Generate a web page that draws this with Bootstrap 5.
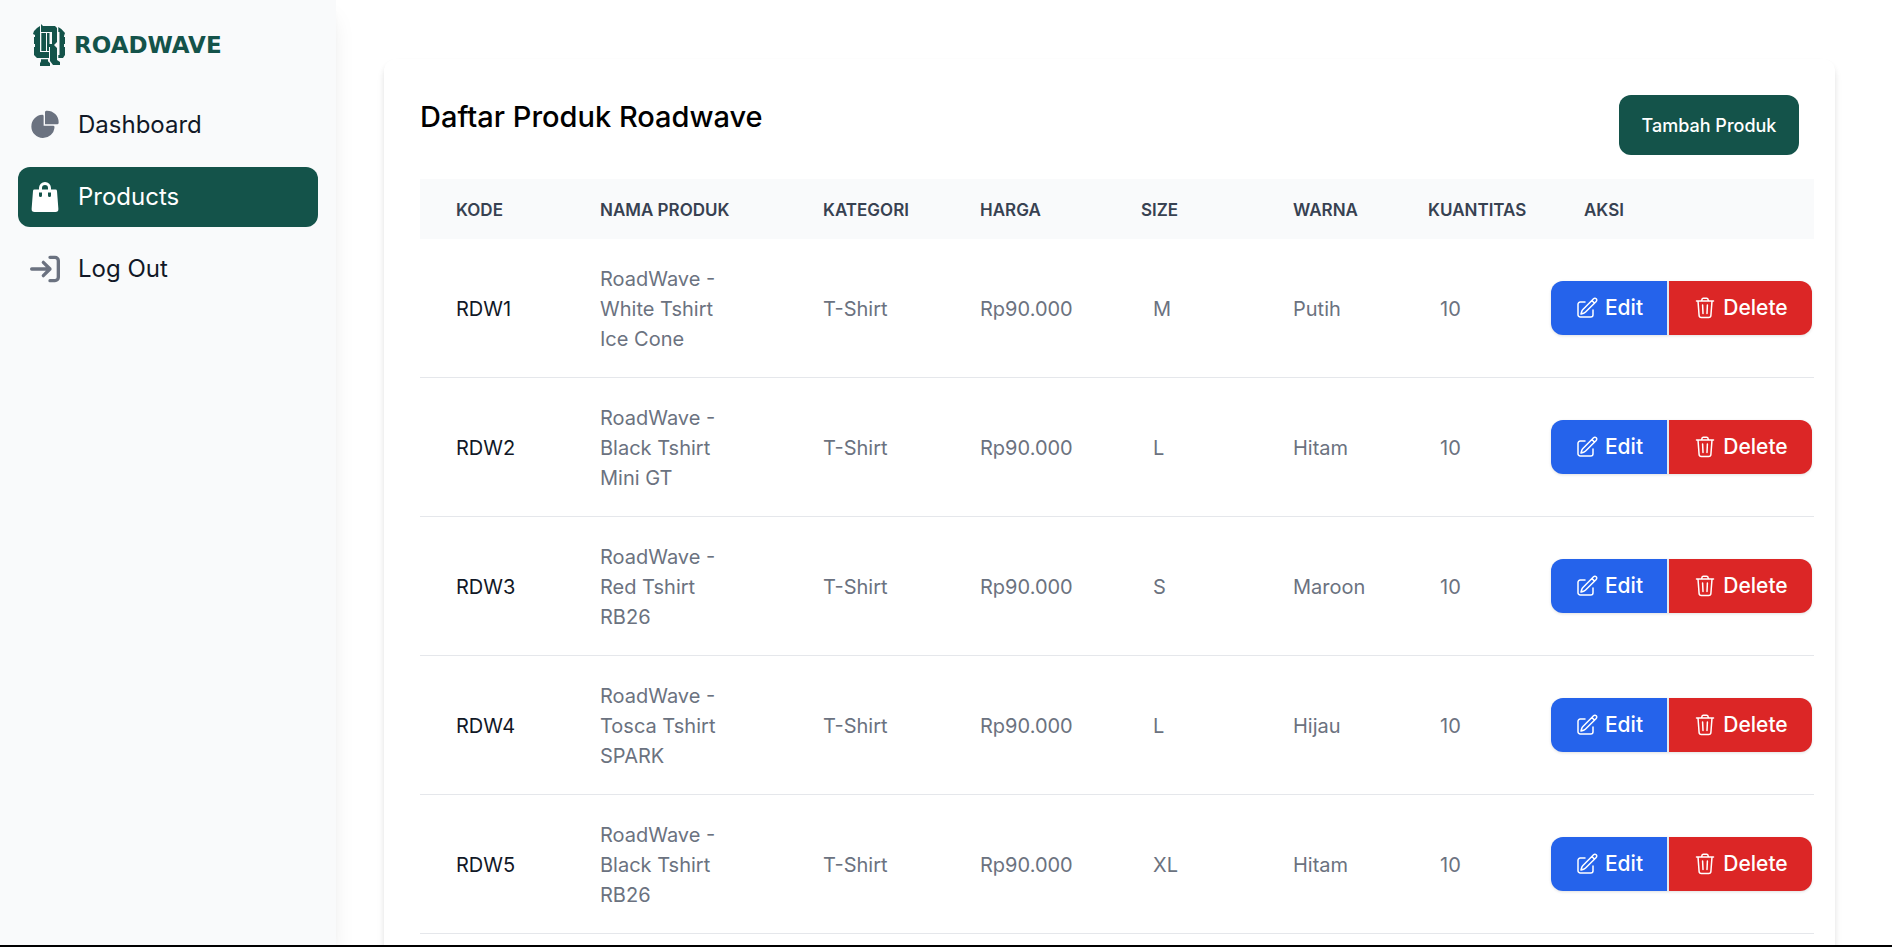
<!DOCTYPE html>
<html lang="id">
<head>
<meta charset="utf-8">
<meta name="viewport" content="width=device-width, initial-scale=1">
<title>Roadwave - Products</title>
<link href="https://cdn.jsdelivr.net/npm/bootstrap@5.3.0/dist/css/bootstrap.min.css" rel="stylesheet">
<style>
  :root { --rw-green: #14534a; --rw-soft: #f9fafb; --rw-gray: #6b7280; --rw-ink: #111827; }
  body { font-family: Inter, "Liberation Sans", sans-serif; font-size: 20px; line-height: 30px; color: var(--rw-gray); }
  .shell { border-bottom: 2px solid #000; }
  .sidebar { width: 336px; background: var(--rw-soft); padding: 20px 18px 24px; box-shadow: 0 15px 23px -5px rgba(0,0,0,.1), 0 6px 9px -6px rgba(0,0,0,.1); }
  .brand { height: 50px; margin: 0 0 25px 15px; gap: 9px; color: var(--rw-green); font: bold 23px/50px "DejaVu Sans", sans-serif; }
  .side-links { gap: 12px; }
  .side-link { height: 60px; padding: 0 12px; gap: 18px; border-radius: 12px; font-size: 24px; color: var(--rw-ink); }
  .side-link svg { color: var(--rw-gray); }
  .side-link.active { background: var(--rw-green); color: #fff; }
  .side-link.active svg { color: #fff; }
  .main-area { min-width: 0; padding: 59px 57px 0 48px; }
  .panel { min-height: 100vh; padding: 36px; border-radius: 12px; box-shadow: 0 6px 9px -1px rgba(0,0,0,.1), 0 3px 6px -2px rgba(0,0,0,.1); }
  .panel-title { font-size: 29px; line-height: 44px; font-weight: 500; color: #000; }
  .btn-add { width: 180px; height: 60px; border-radius: 12px; background: var(--rw-green); color: #fff; font-size: 18px; font-weight: 500; }
  .btn-add:hover { background: #0f423b; color: #fff; }
  .product-table { table-layout: fixed; width: 100%; margin-top: 24px; }
  .product-table th, .product-table td { padding: 25px 36px 23px; text-align: left; }
  .product-table thead th { padding: 19px 0 17px 36px; height: 60px; background: var(--rw-soft); color: #374151; font-size: 17px; line-height: 24px; font-weight: 600; text-transform: uppercase; }
  .product-table tbody tr { border-bottom: 1px solid #e5e7eb; }
  .product-table tbody th { color: var(--rw-ink); font-weight: 400; white-space: nowrap; }
  .product-table .product-name { padding-right: 48px; }
  .product-table .inset { padding-left: 48px; }
  .product-table .actions { padding: 24px 3px; }
  .action-group { gap: 2px; border-radius: 12px; background: #e5e7eb; box-shadow: 0 1px 3px rgba(0,0,0,.12); overflow: hidden; }
  .btn-act { height: 54px; padding: 0; gap: 6px; border-radius: 0; color: #fff; font-size: 21px; font-weight: 500; }
  .btn-edit { width: 116px; background: #2563eb; }
  .btn-edit:hover { background: #1d4ed8; color: #fff; }
  .btn-del { width: 143px; background: #dc2626; }
  .btn-del:hover { background: #b91c1c; color: #fff; }
</style>
</head>
<body>
<svg class="d-none">
  <symbol id="i-edit" viewBox="0 0 24 24"><path fill="none" stroke="currentColor" stroke-width="1.5" stroke-linecap="round" stroke-linejoin="round" d="M16.862 4.487l1.687-1.688a1.875 1.875 0 112.652 2.652L10.582 16.07a4.5 4.5 0 01-1.897 1.13L6 18l.8-2.685a4.5 4.5 0 011.13-1.897l8.932-8.931zm0 0L19.5 7.125M18 14v4.75A2.25 2.25 0 0115.75 21H5.25A2.25 2.25 0 013 18.75V8.25A2.25 2.25 0 015.25 6H10"/></symbol>
  <symbol id="i-trash" viewBox="0 0 24 24"><path fill="none" stroke="currentColor" stroke-width="1.5" stroke-linecap="round" stroke-linejoin="round" d="M3.500 5h17M5 5l1.100 14.500a2.200 2.200 0 0 0 2.200 2h7.400a2.200 2.200 0 0 0 2.200-2L19 5M8.500 5l.4-1.500a1.500 1.500 0 0 1 1.500-1.200h3.200a1.500 1.500 0 0 1 1.500 1.200l.4 1.500M9.600 9l.4 8.500M14.400 9l-.4 8.500"/></symbol>
</svg>
<div class="shell d-flex vh-100 overflow-hidden">
  <aside class="sidebar flex-shrink-0">
    <a href="#" class="brand d-flex align-items-center text-decoration-none">
      <svg width="32" height="42" viewBox="0 0 32 42" fill="currentColor" aria-hidden="true">
        <path d="M4 4l3-2v26h9v6H4l-3-3v-8h1v-3H1v-7h1v-2l-2-1 1-3z"/>
        <path d="M8.300 9H13v18H8.300z"/>
        <path d="M8 0l2 2h12l2 2v14l-3 3 3 3v12l3 2v3h-7l-3-4V23h-1v4h-2V9h2.500v11H19V8H8z"/>
        <path d="M25.300 3l3 2 3.700 4-1 3v1h1v7h-1v3h1v8l-2 3h-4.700v-3h1.200V8h-1.200z"/>
        <path d="M8 35.300h7v2l2 2V42H7v-2.700l1-2z"/>
      </svg>
      <span>ROADWAVE</span>
    </a>
    <nav class="side-links d-flex flex-column">
      <a href="#" class="side-link d-flex align-items-center text-decoration-none">
        <svg width="30" height="30" viewBox="0 0 22 21" fill="currentColor" aria-hidden="true"><path d="M16.975 11H10V4.025a1 1 0 0 0-1.066-.998 8.500 8.500 0 1 0 9.039 9.039.999.999 0 0 0-1-1.066h.002Z"/><path d="M12.500 0c-.157 0-.311.010-.565.027A1 1 0 0 0 11 1.020V10h8.975a1 1 0 0 0 1-.935c.013-.188.028-.374.028-.565A8.510 8.510 0 0 0 12.500 0Z"/></svg>
        <span>Dashboard</span>
      </a>
      <a href="#" class="side-link active d-flex align-items-center text-decoration-none" aria-current="page">
        <svg width="30" height="30" viewBox="0 0 18 20" fill="currentColor" aria-hidden="true"><path d="M17 5.923A1 1 0 0 0 16 5h-3V4a4 4 0 1 0-8 0v1H2a1 1 0 0 0-1 .923L.086 17.846A2 2 0 0 0 2.080 20h13.840a2 2 0 0 0 1.994-2.153L17 5.923ZM7 9a1 1 0 0 1-2 0V7h2v2Zm0-5a2 2 0 1 1 4 0v1H7V4Zm6 5a1 1 0 1 1-2 0V7h2v2Z"/></svg>
        <span>Products</span>
      </a>
      <a href="#" class="side-link d-flex align-items-center text-decoration-none">
        <svg width="30" height="30" viewBox="0 0 18 16" fill="none" stroke="currentColor" stroke-width="2" stroke-linecap="round" stroke-linejoin="round" aria-hidden="true"><path d="M1 8h11m0 0L8 4m4 4-4 4m4-11h3a2 2 0 0 1 2 2v10a2 2 0 0 1-2 2h-3"/></svg>
        <span>Log Out</span>
      </a>
    </nav>
  </aside>
  <main class="main-area flex-grow-1">
    <section class="panel bg-white">
      <div class="d-flex justify-content-between align-items-start">
        <h1 class="panel-title mb-0">Daftar Produk Roadwave</h1>
        <button type="button" class="btn btn-add border-0">Tambah Produk</button>
      </div>
      <table class="product-table">
        <colgroup>
          <col style="width:144px"><col style="width:223px"><col style="width:157px"><col style="width:161px"><col style="width:152px"><col style="width:135px"><col style="width:156px"><col style="width:266px">
        </colgroup>
        <thead>
          <tr><th scope="col">Kode</th><th scope="col">Nama Produk</th><th scope="col">Kategori</th><th scope="col">Harga</th><th scope="col">Size</th><th scope="col">Warna</th><th scope="col">Kuantitas</th><th scope="col">Aksi</th></tr>
        </thead>
        <tbody id="rows"></tbody>
      </table>
    </section>
  </main>
</div>
<script src="https://cdn.jsdelivr.net/npm/bootstrap@5.3.0/dist/js/bootstrap.bundle.min.js"></script>
<script>
  const products = [
    ["RDW1", "RoadWave - White Tshirt Ice Cone", "M", "Putih"],
    ["RDW2", "RoadWave - Black Tshirt Mini GT", "L", "Hitam"],
    ["RDW3", "RoadWave - Red Tshirt RB26", "S", "Maroon"],
    ["RDW4", "RoadWave - Tosca Tshirt SPARK", "L", "Hijau"],
    ["RDW5", "RoadWave - Black Tshirt RB26", "XL", "Hitam"]
  ];
  document.getElementById("rows").innerHTML = products.map(([code, name, size, color]) => `
    <tr>
      <th scope="row">${code}</th><td class="product-name">${name}</td><td class="text-nowrap">T-Shirt</td><td class="text-nowrap">Rp90.000</td>
      <td class="inset">${size}</td><td class="text-nowrap pe-0">${color}</td><td class="inset">10</td>
      <td class="actions"><div class="action-group d-inline-flex align-middle">
        <button type="button" class="btn btn-act btn-edit border-0 d-flex align-items-center justify-content-center"><svg width="24" height="24" aria-hidden="true"><use href="#i-edit"/></svg>Edit</button>
        <button type="button" class="btn btn-act btn-del border-0 d-flex align-items-center justify-content-center"><svg width="24" height="24" aria-hidden="true"><use href="#i-trash"/></svg>Delete</button>
      </div></td>
    </tr>`).join("");
</script>
</body>
</html>
